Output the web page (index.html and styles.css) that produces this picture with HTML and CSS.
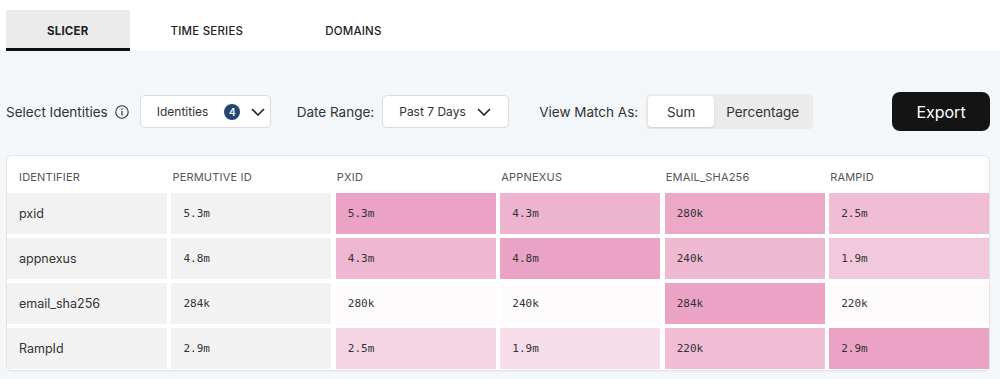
FILE: index.html
```html
<!DOCTYPE html>
<html lang="en">
<head>
    <meta charset="UTF-8">
    <title>Identity Slicer</title>
    <link rel="stylesheet" href="styles.css">
</head>
<body>

    <div class="tabs">
        <div class="tab active">SLICER</div>
        <div class="tab">TIME SERIES</div>
        <div class="tab">DOMAINS</div>
    </div>

    <div class="page">
        <div class="controls">
            <span class="label">Select Identities</span>
            <svg class="info" width="14" height="14" viewBox="0 0 14 14">
                <circle cx="7" cy="7" r="6.2" fill="none" stroke="#333" stroke-width="1.1"/>
                <circle cx="7" cy="4.1" r="0.8" fill="#333"/>
                <path d="M7 6 V10.4" stroke="#333" stroke-width="1.2"/>
            </svg>
            <div class="select identities">
                <span>Identities</span>
                <span class="badge">4</span>
                <svg class="chevron" width="14" height="8" viewBox="0 0 14 8"><path d="M1 1 L7 7 L13 1" fill="none" stroke="#222" stroke-width="1.6"/></svg>
            </div>

            <span class="label date-label">Date Range:</span>
            <div class="select dates">
                <span>Past 7 Days</span>
                <svg class="chevron" width="14" height="8" viewBox="0 0 14 8"><path d="M1 1 L7 7 L13 1" fill="none" stroke="#222" stroke-width="1.6"/></svg>
            </div>

            <span class="label view-label">View Match As:</span>
            <div class="toggle">
                <div class="seg on">Sum</div>
                <div class="seg">Percentage</div>
            </div>

            <button class="export">Export</button>
        </div>

        <div class="card">
            <div class="grid">
                <div class="th first">IDENTIFIER</div>
                <div class="th">PERMUTIVE ID</div>
                <div class="th">PXID</div>
                <div class="th">APPNEXUS</div>
                <div class="th">EMAIL_SHA256</div>
                <div class="th">RAMPID</div>

                <div class="td name">pxid</div>
                <div class="td num base">5.3m</div>
                <div class="td num heat" style="--heat:1">5.3m</div>
                <div class="td num heat" style="--heat:0.82">4.3m</div>
                <div class="td num heat" style="--heat:0.95">280k</div>
                <div class="td num heat" style="--heat:0.72">2.5m</div>

                <div class="td name">appnexus</div>
                <div class="td num base">4.8m</div>
                <div class="td num heat" style="--heat:0.78">4.3m</div>
                <div class="td num heat" style="--heat:1">4.8m</div>
                <div class="td num heat" style="--heat:0.76">240k</div>
                <div class="td num heat" style="--heat:0.6">1.9m</div>

                <div class="td name">email_sha256</div>
                <div class="td num base">284k</div>
                <div class="td num heat" style="--heat:0.04">280k</div>
                <div class="td num heat" style="--heat:0.04">240k</div>
                <div class="td num heat" style="--heat:1">284k</div>
                <div class="td num heat" style="--heat:0.04">220k</div>

                <div class="td name">RampId</div>
                <div class="td num base">2.9m</div>
                <div class="td num heat" style="--heat:0.47">2.5m</div>
                <div class="td num heat" style="--heat:0.37">1.9m</div>
                <div class="td num heat" style="--heat:0.72">220k</div>
                <div class="td num heat" style="--heat:1">2.9m</div>
            </div>
        </div>
    </div>

</body>
</html>
```

FILE: styles.css
```css
:root {
    --page-bg: #f3f7f9;
    --text: #2b2b2b;
    --muted: #555;
    --line: #dcdcdc;
    --cell-gray: #f2f2f2;
    --pink: 234, 163, 196;
}

body {
    margin: 0;
    font-family: 'Inter', 'Noto Sans', sans-serif;
    color: var(--text);
    background: var(--page-bg);
}

/* Tabs */
.tabs {
    display: flex;
    background: white;
    padding: 10px 0 0 6px;
}

.tab {
    height: 38px;
    line-height: 42px;
    padding: 0 41px;
    font-size: 11.5px;
    font-weight: 500;
    letter-spacing: 0.2px;
    color: #222;
    border-bottom: 3px solid transparent;
}

.tab.active {
    background: #ebebeb;
    border-bottom-color: #111;
    font-weight: 700;
}

.page {
    padding: 41px 10px 10px 6px;
}

/* Controls row */
.controls {
    display: flex;
    align-items: center;
    height: 39px;
}

.label {
    font-size: 13.5px;
    color: #333;
}

.info {
    margin-left: 7px;
    margin-right: 11px;
}

.select {
    display: flex;
    align-items: center;
    height: 31px;
    background: white;
    border: 1px solid var(--line);
    border-radius: 5px;
    font-size: 12px;
    color: #333;
    box-sizing: content-box;
}

.identities {
    width: 129px;
}

.identities span:first-child {
    margin-left: 16px;
}

.badge {
    margin-left: 16px;
    width: 16px;
    height: 16px;
    border-radius: 50%;
    background: #24466f;
    color: white;
    font-size: 10px;
    font-weight: 600;
    text-align: center;
    line-height: 16px;
}

.identities .chevron {
    margin-left: 11px;
}

.date-label {
    margin-left: 26px;
}

.dates {
    margin-left: 8px;
    width: 125px;
}

.dates span {
    margin-left: 16px;
}

.dates .chevron {
    margin-left: auto;
    margin-right: 17px;
}

.view-label {
    margin-left: 30px;
}

.toggle {
    display: flex;
    margin-left: 8px;
    height: 35px;
    padding: 2px;
    box-sizing: border-box;
    background: #ebebeb;
    border-radius: 4px;
}

.seg {
    display: flex;
    align-items: center;
    justify-content: center;
    font-size: 13.5px;
    color: #333;
    padding: 0 12px;
}

.seg.on {
    width: 66px;
    padding: 0;
    background: white;
    border-radius: 4px;
    box-shadow: 0 1px 2px rgba(0, 0, 0, 0.12);
}

.export {
    margin-left: auto;
    width: 98px;
    height: 39px;
    background: #141414;
    color: white;
    border: none;
    border-radius: 8px;
    font-family: inherit;
    font-size: 16px;
}

/* Table */
.card {
    margin-top: 24px;
    background: white;
    border: 1px solid #e2e4e6;
    border-radius: 6px;
    padding-bottom: 1px;
    box-shadow: 0 1px 2px rgba(0, 0, 0, 0.04);
}

.grid {
    display: grid;
    grid-template-columns: repeat(6, 1fr);
    grid-template-rows: 33px repeat(4, 41px);
    column-gap: 4.6px;
    row-gap: 4px;
}

.th {
    display: flex;
    align-items: center;
    font-size: 11px;
    color: var(--muted);
    letter-spacing: 0.2px;
    padding-left: 1px;
    padding-top: 8px;
}

.th.first {
    padding-left: 12px;
}

.td {
    display: flex;
    align-items: center;
    padding-left: 12px;
    color: #333;
}

.name {
    background: var(--cell-gray);
    font-size: 12.5px;
}

.num {
    font-family: 'DejaVu Sans Mono', monospace;
    font-size: 11px;
}

.base {
    background: var(--cell-gray);
}

.heat {
    background: rgba(var(--pink), var(--heat));
}
```
